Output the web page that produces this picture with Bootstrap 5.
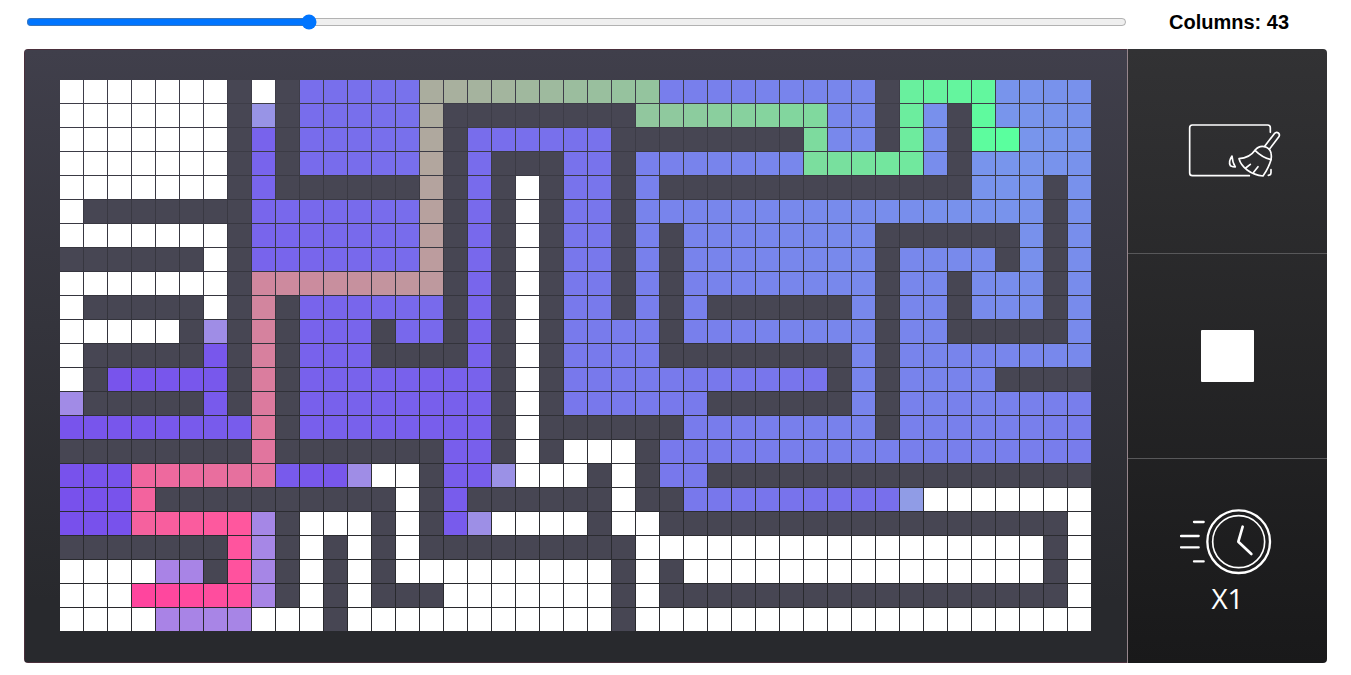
<!DOCTYPE html>
<html lang="en">
<head>
<meta charset="utf-8">
<meta name="viewport" content="width=device-width, initial-scale=1">
<title>Pathfinding grid</title>
<link href="https://cdn.jsdelivr.net/npm/bootstrap@5.3.0/dist/css/bootstrap.min.css" rel="stylesheet">
<style>
  body { font-family: "Liberation Sans", Arial, sans-serif; color: #000; }
  .side-width { flex: 0 0 200px; }
  .top-bar { height: 49px; padding-bottom: 6px; }
  .range-box { padding-left: 2px; }
  .size-range { width: 100%; height: 16px; margin: 0; accent-color: #0075ff; }
  .size-text { font-size: 20px; line-height: 24px; font-weight: 700; }
  .stage { border-radius: 4px; overflow: hidden; }
  .board {
    padding: 30px 36px 31px 35px;
    border: 1px solid #4a2f3b;
    border-right: 0;
    background: linear-gradient(#403f4b, #28292d 90%);
  }
  .maze { display: grid; grid-template-columns: repeat(43, 1fr); gap: 1px; }
  .cell { aspect-ratio: 1; background: #fff; }
  .wall { background: #474653; }
  .tools { border-left: 1px solid #96868c; background: linear-gradient(#323234, #19191a); }
  .tool { flex: 1 1 0; border: 0; background: none; color: #fff; }
  .tool + .tool { border-top: 1px solid #58585a; }
  .tool svg { fill: none; stroke: currentColor; stroke-linecap: round; stroke-linejoin: round; }
  .swatch { width: 53px; height: 52px; background: #fff; border-radius: 1px; }
  .speed-text { margin-top: 2px; font: 500 28px/40px "Open Sans", "Noto Sans", sans-serif; }
</style>
</head>
<body>
<main class="container-fluid px-4">
  <div class="top-bar d-flex align-items-center">
    <div class="range-box flex-grow-1"><input class="size-range d-block" id="columns" type="range" min="10" max="140" value="43"></div>
    <label class="side-width size-text text-center ps-1" for="columns">Columns: 43</label>
  </div>
  <div class="stage d-flex">
    <section class="board flex-grow-1">
      <div class="maze" id="maze"></div>
    </section>
    <aside class="tools side-width d-flex flex-column">
      <button class="tool d-flex align-items-center justify-content-center" type="button" aria-label="Clear board">
        <svg width="110" height="56" viewBox="9 40 330 168" stroke-width="5">
          <path d="M301 68V54q0-8-8-8H67q-8 0-8 8v136q0 8 8 8h171M303 180v9q0 7-8 8"/>
          <path d="M284 110 313 72q6-7 12-2 6 5 1 12l-28 37"/>
          <path d="M255 122c9-11 22-14 34-9 14 6 17 20 14 37"/>
          <path d="M255 122c-11 16-27 24-48 25 7 26 37 49 72 52 11-16 19-31 24-49-17-4-33-13-48-28Z"/>
          <path d="M227 175l14-11M251 188l13-17"/>
          <path d="M186 139c-9 13-9 22-5 29 4 2 9 4 15 4-6-9-9-20-10-33Z"/>
        </svg>
      </button>
      <button class="tool d-flex align-items-center justify-content-center" type="button" aria-label="Cell type">
        <span class="swatch"></span>
      </button>
      <button class="tool d-flex flex-column align-items-center justify-content-center" type="button">
        <svg class="mt-1" width="96" height="68" viewBox="45 52 288 204" stroke-width="7">
          <circle cx="221" cy="153" r="94"/>
          <circle cx="221" cy="153" r="78" stroke-width="5"/>
          <path d="M233 108 220 153l39 37" stroke-width="8"/>
          <path d="M87 94h29M48 136h53M48 170h53M87 212h29"/>
        </svg>
        <span class="speed-text">X1</span>
      </button>
    </aside>
  </div>
</main>
<script src="https://cdn.jsdelivr.net/npm/bootstrap@5.3.0/dist/js/bootstrap.bundle.min.js"></script>
<script>
  // Run-length rows: # wall, . free, v visited, p path, f frontier
  const rows = [
    "7. 1# 1. 1# 5v 10p 9v 1# 4p 4v",
    "7. 1# 1f 1# 5v 1p 8# 8p 2v 1# 1p 1v 1# 1p 4v",
    "7. 1# 1v 1# 5v 1p 1# 6v 8# 1p 2v 1# 1p 1v 1# 2p 3v",
    "7. 1# 1v 1# 5v 1p 1# 1v 3# 2v 1# 7v 5p 1v 1# 5v",
    "7. 1# 1v 6# 1p 1# 1v 1# 1. 1# 2v 1# 1v 13# 3v 1# 1v",
    "1. 7# 7v 1p 1# 1v 1# 1. 1# 2v 1# 17v 1# 1v",
    "7. 1# 7v 1p 1# 1v 1# 1. 1# 2v 1# 1v 1# 8v 6# 1v 1# 1v",
    "6# 1. 1# 7v 1p 1# 1v 1# 1. 1# 2v 1# 1v 1# 8v 1# 4v 1# 1v 1# 1v",
    "7. 1# 8p 1# 1v 1# 1. 1# 2v 1# 1v 1# 8v 1# 2v 1# 3v 1# 1v",
    "1. 5# 1. 1# 1p 1# 6v 1# 1v 1# 1. 1# 2v 1# 1v 1# 1v 6# 1v 1# 2v 1# 3v 1# 1v",
    "5. 1# 1f 1# 1p 1# 3v 1# 2v 1# 1v 1# 1. 1# 4v 1# 8v 1# 2v 5# 1v",
    "1. 5# 1v 1# 1p 1# 3v 4# 1v 1# 1. 1# 4v 8# 1v 1# 8v",
    "1. 1# 5v 1# 1p 1# 8v 1# 1. 1# 11v 1# 1v 1# 4v 4#",
    "1f 5# 1v 1# 1p 1# 8v 1# 1. 1# 6v 6# 1v 1# 8v",
    "8v 1p 1# 8v 1# 1. 6# 8v 1# 8v",
    "8# 1p 7# 2v 1# 1. 1# 3. 1# 18v",
    "3v 6p 3v 1f 2. 1# 2v 1f 3. 1# 1. 1# 2v 16#",
    "3v 1p 10# 1. 1# 1v 6# 1. 2# 9v 1f 7.",
    "3v 5p 1f 1# 3. 1# 1. 1# 1v 1f 4. 1# 2. 17# 1.",
    "7# 1p 1f 1# 1. 1# 1. 1# 1. 9# 17. 1# 1.",
    "4. 2f 1# 1p 1f 1# 1. 1# 1. 1# 9. 1# 1. 1# 15. 1# 1.",
    "3. 5p 1f 1# 1. 1# 1. 3# 7. 1# 1. 17# 1.",
    "4. 4f 3. 1# 11. 1# 19."
  ];
  const grid = rows.map(r => r.split(" ").map(t => t.slice(-1).repeat(parseInt(t))).join(""));

  // Step count of every reached cell, walking out from the green end
  const dist = grid.map(r => Array(r.length).fill(0));
  const seen = grid.map(r => Array(r.length).fill(false));
  const queue = [[39, 2]];
  seen[2][39] = true;
  for (const [x, y] of queue) {
    for (const [nx, ny] of [[x + 1, y], [x - 1, y], [x, y + 1], [x, y - 1]]) {
      if (!grid[ny] || !grid[ny][nx] || seen[ny][nx] || "#.".includes(grid[ny][nx])) continue;
      seen[ny][nx] = true;
      dist[ny][nx] = dist[y][x] + 1;
      queue.push([nx, ny]);
    }
  }

  const shade = {
    v: d => `rgb(120, ${150 - 1.08 * d}, 236)`,
    p: d => `rgb(${Math.min(255, 90 + 2.5 * d)}, ${255 - 2.55 * d}, 158)`,
    f: d => `rgb(${118 + 0.7 * d}, ${181 - 0.68 * d}, 230)`
  };
  const maze = document.getElementById("maze");
  grid.forEach((row, y) => [...row].forEach((kind, x) => {
    const cell = document.createElement("div");
    cell.className = kind === "#" ? "cell wall" : "cell";
    if (shade[kind]) cell.style.background = shade[kind](dist[y][x]);
    maze.append(cell);
  }));
</script>
</body>
</html>
